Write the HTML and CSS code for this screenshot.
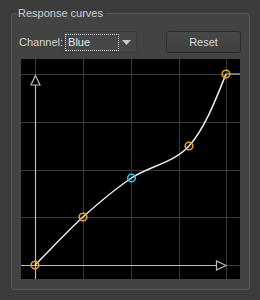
FILE: index.html
```html
<!DOCTYPE html>
<html lang="en">
	<head>
		<meta charset="UTF-8" />
		<title>Response curves</title>
		<link rel="stylesheet" href="styles.css">
	</head>
	<body>
		<fieldset class="group">
			<legend>Response curves</legend>

			<div class="toolbar">
				<span class="label">Channel:</span>
				<div class="combo">
					<span class="combo-value">Blue</span>
					<svg class="combo-arrow" width="9" height="5" viewBox="0 0 9 5">
						<path d="M0 0 H9 L4.5 5 Z" fill="#c8c8c8" />
					</svg>
				</div>
				<button class="btn">Reset</button>
			</div>

			<svg class="plot" width="219" height="220" viewBox="0 0 219 220">
				<rect width="219" height="220" fill="#000" />
				<g stroke="#3b3b3b" stroke-width="1">
					<line x1="62.5" y1="0" x2="62.5" y2="220" />
					<line x1="110.5" y1="0" x2="110.5" y2="220" />
					<line x1="158.5" y1="0" x2="158.5" y2="220" />
					<line x1="205.5" y1="0" x2="205.5" y2="220" />
					<line x1="14.5" y1="0" x2="14.5" y2="16" />
					<line x1="0" y1="15.5" x2="219" y2="15.5" />
					<line x1="0" y1="63.5" x2="219" y2="63.5" />
					<line x1="0" y1="111.5" x2="219" y2="111.5" />
					<line x1="0" y1="158.5" x2="219" y2="158.5" />
					<line x1="205" y1="206.5" x2="219" y2="206.5" />
				</g>
				<!-- axes -->
				<g stroke="#bdbdbd" stroke-width="1.2" fill="#000">
					<line x1="14.5" y1="26" x2="14.5" y2="220" />
					<line x1="0" y1="206.5" x2="195" y2="206.5" />
					<path d="M14.5 16.5 L19 26 L10 26 Z" />
					<path d="M205 206.5 L195.5 202 L195.5 211 Z" />
				</g>
				<!-- curve -->
				<path d="M205 15 H219" stroke="#9a9a9a" stroke-width="1.5" fill="none" />
				<path
					d="M14 206 C30 190 45.9 172.5 62 158 C78.1 143.5 92.8 130.8 110.5 119 C128.2 107.2 152.2 104.3 168 87 C183.7 69.7 195 40 205 15"
					stroke="#ececec"
					stroke-width="1.5"
					fill="none"
				/>
				<g fill="none" stroke-width="1.6">
					<circle cx="14" cy="206" r="3.8" stroke="#ee9d25" />
					<circle cx="62" cy="158" r="3.8" stroke="#ee9d25" />
					<circle cx="110.5" cy="119" r="3.8" stroke="#2ec2e6" />
					<circle cx="168" cy="87" r="3.8" stroke="#ee9d25" />
					<circle cx="205" cy="15" r="3.8" stroke="#ee9d25" />
				</g>
			</svg>
		</fieldset>
	</body>
</html>
```

FILE: styles.css
```css
body {
	margin: 0;
	width: 260px;
	height: 300px;
	overflow: hidden;
	background-color: #3c3c3c;
	font-family: "Liberation Sans", Arial, sans-serif;
	font-size: 11px;
	color: #d6d6d6;
}
.group {
	margin: 6px 10px 0 11px;
	padding: 11px 9px 10px 9px;
	border: 1px solid #595959;
	border-radius: 3px;
	background-color: #434343;
}
.group legend {
	margin-left: -5px;
	padding: 0 2px;
	line-height: 14px;
	color: #cfcfcf;
}
.toolbar {
	display: flex;
	align-items: center;
	height: 22px;
}
.label {
	margin-left: -2px;
}
.combo {
	display: flex;
	align-items: center;
	box-sizing: border-box;
	width: 74px;
	height: 22px;
	padding: 0 5px 0 1px;
	border: 1px solid #393939;
	border-radius: 2px;
	background-color: #474747;
}
.combo-value {
	box-sizing: border-box;
	width: 54px;
	height: 17px;
	padding-left: 2px;
	line-height: 15px;
	border: 1px dotted #e0e0e0;
	color: #e6e6e6;
}
.combo-arrow {
	margin-left: auto;
}
.btn {
	box-sizing: border-box;
	width: 75px;
	height: 22px;
	margin-left: auto;
	margin-right: -1px;
	padding: 0;
	border: 1px solid #2c2c2c;
	border-radius: 3px;
	background: linear-gradient(#484848, #404040);
	font-family: inherit;
	font-size: 11px;
	color: #d8d8d8;
}
.plot {
	display: block;
	margin-top: 6px;
}
```
